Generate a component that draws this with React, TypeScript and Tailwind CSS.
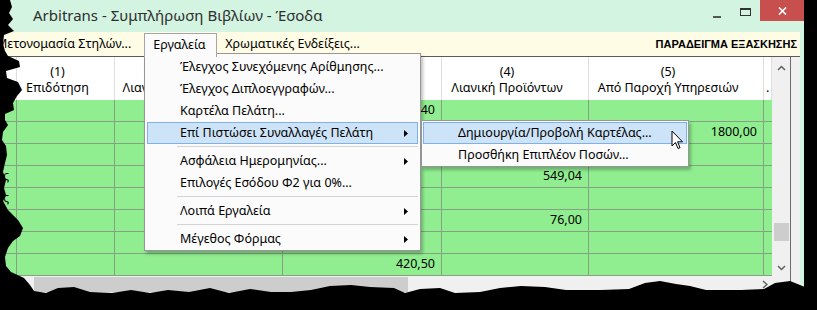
import React from "react";

const colW = [17, 98, 168, 159, 147, 175, 8];

type Row = (string | null)[];
const rows: Row[] = [
  [null, null, null, "315,40", null, null, null],
  [null, null, null, null, null, "1800,00", null],
  [null, null, null, null, null, null, null],
  ["ς", null, null, null, "549,04", null, null],
  ["ς", null, null, null, null, null, null],
  [null, null, null, null, "76,00", null, null],
  [null, null, null, null, null, null, null],
  [null, null, null, "420,50", null, null, null],
];

const headers: [string, string, string][] = [
  ["", "", "left"],
  ["(1)", "Επιδότηση", "center"],
  ["(2)", "Λιανική Εμπορευμάτων", "center"],
  ["(3)", "Χονδρικές Πωλήσεις", "center"],
  ["(4)", "Λιανική Προϊόντων", "center"],
  ["(5)", "Από Παροχή Υπηρεσιών", "center"],
  ["", ".", "left"],
];

function Arrow() {
  return (
    <svg width="4" height="7" viewBox="0 0 4 7" className="shrink-0">
      <path d="M0 0 L4 3.5 L0 7 Z" fill="#000" />
    </svg>
  );
}

function MenuItem({ label, sub, hi }: { label: string; sub?: boolean; hi?: boolean }) {
  return (
    <div
      className={
        "mx-[2px] h-[22px] flex items-center pl-[32px] pr-[9px] border " +
        (hi ? "bg-[#cde3f8] border-[#7fb1e6]" : "border-transparent")
      }
    >
      <span className="flex-1 whitespace-nowrap">{label}</span>
      {sub ? <Arrow /> : null}
    </div>
  );
}

function Sep() {
  return (
    <div className="h-[6px] flex items-center pl-[32px] pr-[2px]">
      <div className="w-full h-[2px] border-t border-[#d4d4d4] border-b-white" />
    </div>
  );
}

export default function App() {
  return (
    <div className="relative w-[817px] h-[310px] bg-black overflow-hidden font-['Noto_Sans',sans-serif] text-[12.5px] text-black">
      {/* window */}
      <div className="w-[804px] h-[310px] bg-[#d3f4e1] flex flex-col">
        {/* title bar */}
        <div className="h-[32px] flex shrink-0">
          <div className="flex-1 pl-[33px] pt-[5px] text-[15px] leading-[20px] text-[#2e2e2e] whitespace-nowrap">
            Arbitrans - Συμπλήρωση Βιβλίων - Έσοδα
          </div>
          <div className="flex h-[21px] items-start">
            <div className="w-[26px] h-[21px] flex items-start justify-center pt-[16px]">
              <div className="w-[8px] h-[2px] bg-[#555]" />
            </div>
            <div className="w-[30px] h-[21px] flex items-start justify-center pt-[8px]">
              <div className="w-[11px] h-[8px] border border-[#333] border-t-2" />
            </div>
            <div className="w-[44px] h-[21px] bg-[#c7504f] flex items-center justify-center">
              <svg width="9" height="8" viewBox="0 0 9 8">
                <path d="M1 0.5 L8 7.5 M8 0.5 L1 7.5" stroke="#fff" strokeWidth="1.6" />
              </svg>
            </div>
          </div>
        </div>
        {/* client area */}
        <div className="w-[800px] flex-1 flex flex-col">
          {/* menu bar */}
          <div className="h-[24px] bg-[#fefce5] flex items-end shrink-0">
            <div className="h-[23px] flex items-center -ml-[4px] pr-[13px] whitespace-nowrap">Μετονομασία Στηλών...</div>
            <div className="relative z-40 w-[73px] bg-[#fbfbfb] border-l border-t border-r border-[#a5a5a5] flex items-center pl-[8px] -mb-[1px] h-[24px]">
              Εργαλεία
            </div>
            <div className="h-[23px] flex items-center pl-[8px] whitespace-nowrap">Χρωματικές Ενδείξεις...</div>
            <div className="flex-1 h-[23px] flex items-center justify-end pr-[3px] font-['Liberation_Sans',sans-serif] font-bold text-[11px]">
              ΠΑΡΑΔΕΙΓΜΑ ΕΞΑΣΚΗΣΗΣ
            </div>
          </div>
          {/* grid area */}
          <div className="flex flex-1 border-t border-[#5a5a5a]">
            <div className="w-[772px] flex flex-col">
              {/* header */}
              <div className="flex h-[43px] bg-white">
                {headers.map((h, i) => (
                  <div
                    key={i}
                    style={{ width: colW[i] }}
                    className={
                      "h-full shrink-0 overflow-hidden border-r border-[#dedede] flex flex-col justify-center pt-[3px] leading-[16px] whitespace-nowrap " +
                      (h[2] === "center" ? "items-center pr-[16px]" : "items-start pl-[2px]")
                    }
                  >
                    <div>{h[0] || "\u00a0"}</div>
                    <div>{h[1] || "\u00a0"}</div>
                  </div>
                ))}
              </div>
              {/* rows */}
              {rows.map((r, ri) => (
                <div key={ri} className="flex h-[22px] bg-[#90ee90] border-b border-[#82a282]">
                  {r.map((c, ci) => (
                    <div
                      key={ci}
                      style={{ width: colW[ci] }}
                      className={
                        "h-full shrink-0 overflow-hidden flex items-center justify-end whitespace-nowrap " +
                        (ci === 0 ? "pr-[7px] " : "pr-[6px] ") +
                        (ci < 6 ? "border-r border-[#82a282]" : "")
                      }
                    >
                      {c}
                    </div>
                  ))}
                </div>
              ))}
              {/* horizontal scrollbar */}
              <div className="h-[17px] bg-[#f0f0f0] flex items-center">
                <div className="w-[17px]" />
                <div className="ml-[17px] w-[374px] h-[15px] bg-[#cdcdcd]" />
                <div className="flex-1" />
                <svg width="6" height="9" viewBox="0 0 6 9" className="mr-[4px]">
                  <path d="M1 1 L5 4.5 L1 8" stroke="#606060" strokeWidth="1.5" fill="none" />
                </svg>
              </div>
            </div>
            {/* vertical scrollbar */}
            <div className="w-[18px] flex flex-col bg-[#f0f0f0]">
              <div className="h-[220px] flex flex-col items-center">
                <svg width="9" height="6" viewBox="0 0 9 6" className="mt-[8px]">
                  <path d="M1 5 L4.5 1.5 L8 5" stroke="#606060" strokeWidth="1.5" fill="none" />
                </svg>
                <div className="mt-[152px] w-[15px] h-[18px] bg-[#cdcdcd]" />
                <svg width="9" height="6" viewBox="0 0 9 6" className="mt-[24px]">
                  <path d="M1 1 L4.5 4.5 L8 1" stroke="#606060" strokeWidth="1.5" fill="none" />
                </svg>
              </div>
              <div className="flex-1 bg-[#f0f0f0]" />
            </div>
            <div className="w-[1px] bg-[#6b6b6b]" />
            <div className="flex-1 bg-[#f0f0f0]" />
          </div>
        </div>
      </div>

      {/* dropdown menu */}
      <div className="absolute left-[144px] top-[53px] w-[277px] bg-[#fbfbfb] border border-[#979797] pt-[2px] z-30 shadow-[2px_3px_3px_rgba(0,0,0,0.25)]">
        <MenuItem label="Έλεγχος Συνεχόμενης Αρίθμησης..." />
        <MenuItem label="Έλεγχος Διπλοεγγραφών..." />
        <MenuItem label="Καρτέλα Πελάτη..." />
        <MenuItem label="Επί Πιστώσει Συναλλαγές Πελάτη" sub hi />
        <Sep />
        <MenuItem label="Ασφάλεια Ημερομηνίας..." sub />
        <MenuItem label="Επιλογές Εσόδου Φ2 για 0%..." />
        <Sep />
        <MenuItem label="Λοιπά Εργαλεία" sub />
        <Sep />
        <MenuItem label="Μέγεθος Φόρμας" sub />
      </div>

      {/* submenu */}
      <div className="absolute left-[421px] top-[120px] w-[268px] bg-[#fbfbfb] border border-[#979797] pt-[1px] z-30 shadow-[2px_3px_3px_rgba(0,0,0,0.25)]">
        <div className="mx-[1px] h-[22px] flex items-center pl-[34px] border bg-[#cde3f8] border-[#7fb1e6] whitespace-nowrap">
          Δημιουργία/Προβολή Καρτέλας...
        </div>
        <div className="mx-[1px] h-[22px] flex items-center pl-[34px] border border-transparent whitespace-nowrap">
          Προσθήκη Επιπλέον Ποσών...
        </div>
      </div>

      {/* mouse cursor */}
      <svg className="absolute left-[671px] top-[130px] z-40" width="14" height="21" viewBox="0 0 14 21">
        <path
          d="M1 1 L1 16 L4.5 12.5 L7 18.5 L9 17.7 L6.6 11.8 L11.5 11.8 Z"
          fill="#fff"
          stroke="#000"
          strokeWidth="1"
          strokeLinejoin="miter"
        />
      </svg>

      {/* torn edges */}
      <svg className="absolute inset-0 z-50 pointer-events-none" width="817" height="310" viewBox="0 0 817 310">
        <path
          fill="#000"
          d="M0 0 L10 0 L12 7 L9 13 L13 19 L8 25 L14 31 L4 35 L3 44 L5 51 L8 56 L19 61 L20 67 L6 71 L7 78 L18 82 L22 90 L17 96 L13 103 L14 110 L5 114 L5 120 L8 125 L3 132 L2 140 L6 146 L7 155 L5 163 L3 172 L6 180 L4 188 L6 195 L3 201 L8 210 L18 220 L23 228 L20 236 L13 241 L8 248 L5 257 L6 266 L11 272 L24 278 L30 285 L34 291 L46 293 L58 288 L74 287 L90 292 L112 293 L131 290 L150 293 L168 290 L189 292 L210 288 L229 293 L250 289 L271 292 L291 292 L311 290 L330 286 L351 285 L370 287 L394 288 L405 293 L420 289 L440 288 L455 293 L480 292 L500 288 L521 286 L545 287 L566 290 L601 290 L629 289 L645 283 L660 281 L676 284 L690 286 L706 290 L741 290 L764 289 L775 283 L790 281 L800 285 L812 290 L817 290 L817 310 L0 310 Z"
        />
      </svg>
    </div>
  );
}
